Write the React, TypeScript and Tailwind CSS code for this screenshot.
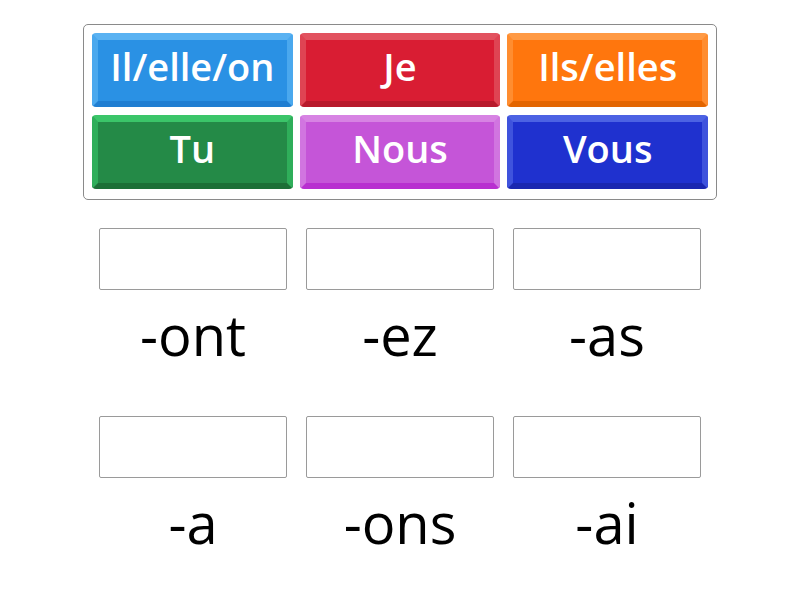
import React from "react";

const tiles = [
  { label: "Il/elle/on", cls: "bg-[#2a91e4] border-t-[#5ab2f2] border-x-[#4aa8ee] border-b-[#1f7ed2]" },
  { label: "Je", cls: "bg-[#d91d33] border-t-[#e2525f] border-x-[#df4453] border-b-[#b8192b]" },
  { label: "Ils/elles", cls: "bg-[#ff760d] border-t-[#ff9a45] border-x-[#ff8d30] border-b-[#e36500]" },
  { label: "Tu", cls: "bg-[#248a47] border-t-[#3bc569] border-x-[#2fae5a] border-b-[#1c6f37]" },
  { label: "Nous", cls: "bg-[#c555d8] border-t-[#d783e3] border-x-[#d175e0] border-b-[#b82fd0]" },
  { label: "Vous", cls: "bg-[#1f31cf] border-t-[#4c62e3] border-x-[#3f53dd] border-b-[#1a27b0]" },
];

const endings = ["-ont", "-ez", "-as", "-a", "-ons", "-ai"];

export default function App() {
  return (
    <div className="w-[800px] h-[600px] bg-white" style={{ fontFamily: '"Open Sans", sans-serif' }}>
      <div className="pt-[24px] flex flex-col items-center">
        <div className="w-[634px] border border-[#8a8a8a] rounded-[5px] pt-[8px] px-[8px] pb-[10px]">
          <div className="grid grid-cols-3 gap-x-[7px] gap-y-[8px]">
            {tiles.map((t) => (
              <div
                key={t.label}
                className={`h-[74px] rounded-[4px] border-solid border-t-[7px] border-x-[6px] border-b-[6px] flex items-center justify-center text-white font-semibold text-[38px] leading-none ${t.cls}`}
              >
                <span className="-mt-[9px]">{t.label}</span>
              </div>
            ))}
          </div>
        </div>
        <div className="mt-[28px] grid grid-cols-[188px_188px_188px] gap-x-[19px] gap-y-[38px]">
          {endings.map((e) => (
            <div key={e} className="flex flex-col">
              <div className="h-[62px] border border-[#9a9a9a] rounded-[2px]" />
              <div className="h-[88px] leading-[88px] text-center text-[56px] text-black">{e}</div>
            </div>
          ))}
        </div>
      </div>
    </div>
  );
}
